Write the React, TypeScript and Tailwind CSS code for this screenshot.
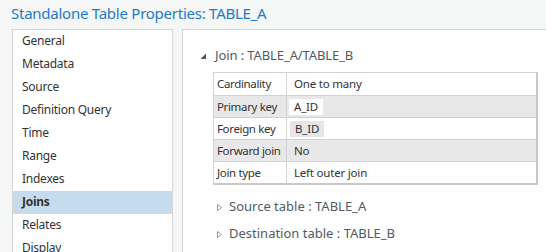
import React from 'react';

const menu = ['General', 'Metadata', 'Source', 'Definition Query', 'Time', 'Range', 'Indexes', 'Joins', 'Relates', 'Display'];

const rows: { label: string; value: string; box?: 'white' | 'gray' }[] = [
  { label: 'Cardinality', value: 'One to many' },
  { label: 'Primary key', value: 'A_ID', box: 'white' },
  { label: 'Foreign key', value: 'B_ID', box: 'gray' },
  { label: 'Forward join', value: 'No' },
  { label: 'Join type', value: 'Left outer join' },
];

function Collapsed() {
  return (
    <svg width="7" height="9" viewBox="0 0 7 9" className="shrink-0">
      <path d="M1.5 1.5 L5.5 4.5 L1.5 7.5 Z" fill="none" stroke="#9a9a9a" strokeWidth="1" />
    </svg>
  );
}

function Expanded() {
  return (
    <svg width="7" height="7" viewBox="0 0 7 7" className="shrink-0">
      <path d="M6 0.5 L6 6 L0.5 6 Z" fill="#555" />
    </svg>
  );
}

export default function App() {
  return (
    <div
      className="w-[546px] h-[252px] overflow-hidden bg-[#f5f6f6] flex flex-col"
      style={{ fontFamily: '"Noto Sans", "Open Sans", sans-serif' }}
    >
      {/* Title */}
      <div className="h-[29px] pl-[11px] pt-[3px] text-[15px] leading-[20px] tracking-[-0.25px] text-[#1f7bc7] whitespace-nowrap">
        Standalone Table Properties: TABLE_A
      </div>

      <div className="flex flex-1 min-h-0">
        {/* Left nav */}
        <div className="ml-[12px] w-[161px] bg-white border border-[#d6d6d6] border-b-0">
          {menu.map((m) => (
            <div
              key={m}
              className={`h-[23px] pl-[9px] text-[12px] leading-[22px] tracking-[-0.25px] text-[#333] whitespace-nowrap ${
                m === 'Joins' ? 'bg-[#c5dbee] font-bold' : ''
              }`}
            >
              {m}
            </div>
          ))}
        </div>

        {/* Right content */}
        <div className="ml-[9px] flex-1 bg-white border-l border-t border-[#d6d6d6] pl-[17px] pt-[16px]">
          <div className="flex items-center h-[20px] text-[13px] tracking-[-0.1px] text-[#505a66]">
            <Expanded />
            <span className="ml-[8px] whitespace-nowrap">Join : TABLE_A/TABLE_B</span>
          </div>

          <div className="ml-[13px] mt-[6px] w-[325px] border border-[#d2d2d2] border-r-2 border-b-2 border-r-[#c8c8c8] border-b-[#c8c8c8]">
            {rows.map((r, i) => (
              <div
                key={r.label}
                className={`flex h-[22px] text-[11.5px] text-[#333] ${
                  i % 2 === 1 ? 'bg-[#e8e8e8]' : 'bg-white'
                } ${i > 0 ? 'border-t border-[#d2d2d2]' : ''}`}
              >
                <div className="w-[73px] pl-[3px] leading-[21px] tracking-[-0.35px] border-r border-[#d2d2d2] whitespace-nowrap">
                  {r.label}
                </div>
                <div className="flex-1 flex items-center pl-[2px] tracking-[-0.2px]">
                  {r.box ? (
                    <span
                      className={`px-[5px] h-[16px] leading-[16px] ${r.box === 'white' ? 'bg-white' : 'bg-[#e6e6e6] ml-[1px]'}`}
                    >
                      {r.value}
                    </span>
                  ) : (
                    <span className="pl-[5px]">{r.value}</span>
                  )}
                </div>
              </div>
            ))}
          </div>

          <div className="ml-[16px] mt-[12px] flex items-center h-[20px] text-[13px] text-[#505a66]">
            <Collapsed />
            <span className="ml-[6px] whitespace-nowrap">Source table : TABLE_A</span>
          </div>
          <div className="ml-[16px] mt-[7px] flex items-center h-[20px] text-[13px] text-[#505a66]">
            <Collapsed />
            <span className="ml-[6px] whitespace-nowrap">Destination table : TABLE_B</span>
          </div>
        </div>
      </div>
    </div>
  );
}
